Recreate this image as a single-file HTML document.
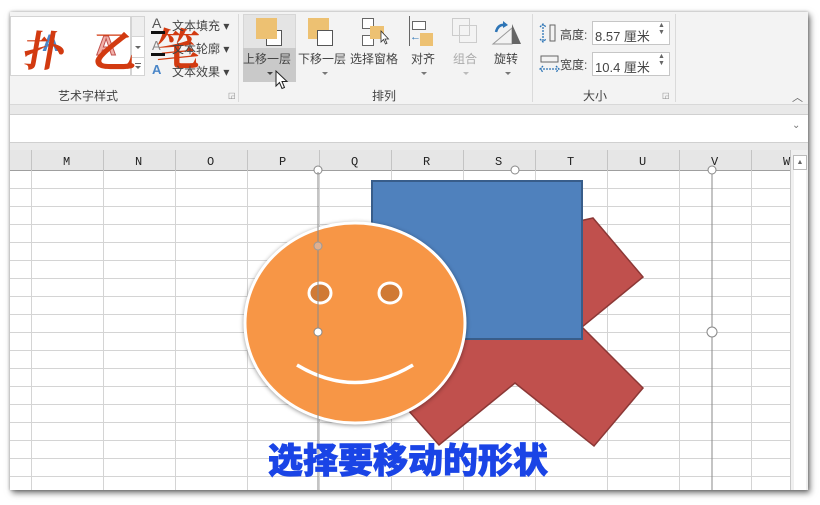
<!DOCTYPE html>
<html><head><meta charset="utf-8"><style>
*{margin:0;padding:0;box-sizing:border-box}
body{width:820px;height:505px;background:#fff;position:relative;overflow:hidden;font-family:"Liberation Sans","Noto Sans CJK SC",sans-serif;font-size:12px;color:#444}
.a{position:absolute}
.win{left:10px;top:12px;width:798px;height:478px;background:#f3f3f3;box-shadow:2px 3px 6px rgba(0,0,0,.55),0 0 3px rgba(0,0,0,.3);overflow:hidden}
.t{position:absolute;white-space:nowrap;font-size:12px;color:#444}
.sep{position:absolute;width:1px;background:#dadada}
.arr{position:absolute;width:0;height:0;border-left:3px solid transparent;border-right:3px solid transparent;border-top:3px solid #666}
</style></head><body>
<div class="a win">
 <div class="a" style="left:0;top:92px;width:798px;height:1px;background:#d8d8d8"></div>
 <div class="a" style="left:0;top:93px;width:798px;height:9px;background:#e9e9e9"></div>
 <div class="a" style="left:0;top:102px;width:798px;height:29px;background:#fff;border-top:1px solid #d0d0d0;border-bottom:1px solid #d0d0d0"></div>
 <div class="t" style="left:782px;top:108px;font-size:10px;color:#777">⌄</div>
 <div class="a" style="left:0;top:131px;width:798px;height:7px;background:#eaeaea"></div>
 <div class="a" style="left:0;top:4px;width:121px;height:60px;background:#fff;border:1px solid #d4d4d4"></div>
 <div class="a" style="left:121px;top:4px;width:14px;height:60px;background:#fff;border:1px solid #d4d4d4"></div>
 <div class="a" style="left:121px;top:4px;width:14px;height:21px;background:#eee;border:1px solid #d4d4d4"></div>
 <div class="a" style="left:121px;top:45px;width:14px;height:19px;border:1px solid #d4d4d4"></div>
 <div class="arr" style="left:125px;top:34px"></div>
 <div class="a" style="left:125px;top:51px;width:6px;height:1px;background:#666"></div>
 <div class="arr" style="left:125px;top:54px"></div>
 <div class="t" style="left:32px;top:18px;font-size:24px;color:#4a86c8;font-weight:bold">A</div>
 <div class="t" style="left:86px;top:18px;font-size:28px;color:#f2b0a8;font-weight:bold;-webkit-text-stroke:1px #c0504d">A</div>
 <div class="t" style="left:14px;top:16px;font-size:42px;line-height:1;color:#d23a10;font-family:'Noto Serif CJK SC',serif;font-weight:700;transform:skewX(-10deg)">扑</div>
 <div class="t" style="left:82px;top:14px;font-size:44px;line-height:1;color:#d23a10;font-family:'Noto Serif CJK SC',serif;font-weight:700">乙</div>
 <div class="t" style="left:146px;top:12px;font-size:44px;line-height:1;color:#d23a10;font-family:'Noto Serif CJK SC',serif;font-weight:700">笔</div>
 <div class="t" style="left:142px;top:3px;font-size:14px;color:#555">A</div>
 <div class="a" style="left:141px;top:19px;width:14px;height:3px;background:#111"></div>
 <div class="t" style="left:162px;top:5px">文本填充 ▾</div>
 <div class="t" style="left:142px;top:26px;font-size:13px;color:#888">A</div>
 <div class="a" style="left:141px;top:41px;width:14px;height:3px;background:#111"></div>
 <div class="t" style="left:162px;top:28px">文本轮廓 ▾</div>
 <div class="t" style="left:142px;top:50px;font-size:13px;color:#4a86c8;font-weight:bold">A</div>
 <div class="t" style="left:162px;top:51px">文本效果 ▾</div>
 <div class="t" style="left:48px;top:75px">艺术字样式</div>
 <div class="t" style="left:218px;top:79px;font-size:8px;color:#888">◲</div>
 <div class="sep" style="left:228px;top:2px;height:88px"></div>
 <div class="a" style="left:233px;top:2px;width:53px;height:68px;background:#e4e4e4;border:1px solid #d6d6d6"></div>
 <div class="a" style="left:233px;top:36px;width:53px;height:34px;background:#c9c9c9"></div>
 <div class="a" style="left:256px;top:18px;width:16px;height:16px;background:#fff;border:1px solid #555"></div>
 <div class="a" style="left:246px;top:6px;width:21px;height:21px;background:#edc172"></div>
 <div class="t" style="left:233px;top:38px">上移一层</div>
 <div class="arr" style="left:257px;top:60px;border-top-color:#444"></div>
 <svg class="a" style="left:265px;top:58px" width="14" height="22"><path d="M1 1 L1 16 L4.5 12.5 L7 18.5 L9.5 17.5 L7 11.5 L12 11.5 Z" fill="#fff" stroke="#222" stroke-width="1"/></svg>
 <div class="a" style="left:298px;top:6px;width:21px;height:21px;background:#edc172"></div>
 <div class="a" style="left:307px;top:18px;width:16px;height:16px;background:#fff;border:1px solid #555"></div>
 <div class="t" style="left:288px;top:38px">下移一层</div>
 <div class="arr" style="left:312px;top:60px;border-color:#777 transparent transparent"></div>
 <div class="a" style="left:352px;top:6px;width:12px;height:11px;background:#fff;border:1px solid #666"></div>
 <div class="a" style="left:352px;top:23px;width:12px;height:11px;background:#fff;border:1px solid #666"></div>
 <div class="a" style="left:360px;top:14px;width:14px;height:13px;background:#edc172"></div>
 <svg class="a" style="left:370px;top:18px" width="10" height="16"><path d="M1 1 L1 12 L3.5 9.5 L5.5 14 L7 13.3 L5 9 L8.5 9 Z" fill="#fff" stroke="#333" stroke-width=".8"/></svg>
 <div class="t" style="left:340px;top:38px">选择窗格</div>
 <div class="a" style="left:399px;top:4px;width:1px;height:30px;background:#666"></div>
 <div class="a" style="left:402px;top:9px;width:14px;height:9px;background:#fff;border:1px solid #666"></div>
 <div class="a" style="left:410px;top:21px;width:13px;height:13px;background:#edc172"></div>
 <div class="t" style="left:400px;top:19px;font-size:11px;color:#2e75b6;font-weight:bold">←</div>
 <div class="t" style="left:401px;top:38px">对齐</div>
 <div class="arr" style="left:411px;top:60px;border-color:#777 transparent transparent"></div>
 <div class="a" style="left:442px;top:6px;width:18px;height:18px;border:1px solid #ccc"></div>
 <div class="a" style="left:449px;top:13px;width:18px;height:18px;border:1px solid #ccc"></div>
 <div class="t" style="left:443px;top:38px;color:#aaa">组合</div>
 <div class="arr" style="left:453px;top:60px;border-color:#bbb transparent transparent"></div>
 <svg class="a" style="left:480px;top:6px" width="32" height="28"><path d="M3 26 L22 26 L22 10 Z" fill="none" stroke="#999"/><path d="M22 6 L22 26 L31 26 Z" fill="#666"/><path d="M6 14 Q8 6 15 7" stroke="#2e75b6" stroke-width="2.5" fill="none"/><path d="M13 3 L18 7 L13 10Z" fill="#2e75b6"/></svg>
 <div class="t" style="left:484px;top:38px">旋转</div>
 <div class="arr" style="left:495px;top:60px;border-color:#777 transparent transparent"></div>
 <div class="t" style="left:362px;top:75px">排列</div>
 <div class="sep" style="left:522px;top:2px;height:88px"></div>
 <svg class="a" style="left:529px;top:11px" width="22" height="20"><path d="M4 1 L4 19 M1 4 L4 1 L7 4 M1 16 L4 19 L7 16" stroke="#2e75b6" fill="none" stroke-width="1.3" stroke-dasharray="2 1"/><rect x="11" y="2" width="5" height="16" fill="none" stroke="#666"/></svg>
 <div class="t" style="left:550px;top:14px">高度:</div>
 <div class="a" style="left:582px;top:9px;width:78px;height:24px;background:#fff;border:1px solid #c6c6c6"></div>
 <div class="t" style="left:585px;top:14px;font-size:13px">8.57 厘米</div>
 <div class="t" style="left:648px;top:10px;font-size:7px;color:#666">▲<br>▼</div>
 <svg class="a" style="left:529px;top:42px" width="22" height="20"><rect x="2" y="2" width="17" height="6" fill="none" stroke="#666"/><path d="M1 15 L20 15 M4 12 L1 15 L4 18 M17 12 L20 15 L17 18" stroke="#2e75b6" fill="none" stroke-width="1.3" stroke-dasharray="2 1"/></svg>
 <div class="t" style="left:550px;top:44px">宽度:</div>
 <div class="a" style="left:582px;top:40px;width:78px;height:24px;background:#fff;border:1px solid #c6c6c6"></div>
 <div class="t" style="left:585px;top:45px;font-size:13px">10.4 厘米</div>
 <div class="t" style="left:648px;top:41px;font-size:7px;color:#666">▲<br>▼</div>
 <div class="t" style="left:573px;top:75px">大小</div>
 <div class="t" style="left:652px;top:79px;font-size:8px;color:#888">◲</div>
 <div class="sep" style="left:665px;top:2px;height:88px"></div>
 <div class="t" style="left:782px;top:77px;font-size:11px;color:#666">︿</div>
 <div class="a" style="left:0;top:138px;width:780px;height:21px;background:#e6e6e6;border-bottom:1px solid #9f9f9f"></div>
 <div class="a" style="left:0;top:159px;width:780px;height:320px;background-color:#fff;background-image:linear-gradient(#d4d4d4 1px,transparent 1px),linear-gradient(90deg,#d4d4d4 1px,transparent 1px);background-size:100% 18px,72px 100%;background-position:0 17px,21px 0"></div>
 <div class="a" style="left:0;top:138px;width:780px;height:21px;background-image:linear-gradient(90deg,#c4c4c4 1px,transparent 1px);background-size:72px 100%;background-position:21px 0"></div>
 <div class="a" style="left:780px;top:138px;width:18px;height:340px;background:#f0f0f0;border-left:1px solid #c8c8c8"></div>
 <div class="a" style="left:783px;top:143px;width:14px;height:15px;background:#fff;border:1px solid #bbb;font-size:7px;text-align:center;line-height:13px;color:#666">▲</div>
 <div class="a" style="left:784px;top:158px;width:12px;height:320px;background:#fff"></div>
</div>
<div class="a" style="left:0;top:155px;width:820px;font-family:'Liberation Mono',monospace;font-size:12px;color:#222">
 <span class="a" style="left:63px">M</span><span class="a" style="left:135px">N</span><span class="a" style="left:207px">O</span><span class="a" style="left:279px">P</span><span class="a" style="left:351px">Q</span><span class="a" style="left:423px">R</span><span class="a" style="left:495px">S</span><span class="a" style="left:567px">T</span><span class="a" style="left:639px">U</span><span class="a" style="left:711px">V</span><span class="a" style="left:783px">W</span>
</div>
<svg class="a" style="left:0;top:0" width="820" height="505">
 <path d="M318 172 L318 490 M712 172 L712 490" stroke="#8a8a8a" stroke-width="1"/>
 <circle cx="318" cy="170" r="4" fill="#fff" stroke="#888"/><circle cx="515" cy="170" r="4" fill="#fff" stroke="#888"/><circle cx="712" cy="170" r="4" fill="#fff" stroke="#888"/>
 <polygon points="408,410 450,360 450,250 593,218 643,277 582,327 643,388 594,446 515,383 439,445" fill="#c0504d" stroke="#8c3836" stroke-width="1.5"/>
 <rect x="372" y="181" width="210" height="158" fill="#4f81bd" stroke="#385d8a" stroke-width="2"/>
 <ellipse cx="355" cy="323" rx="110" ry="100" fill="#f79646" stroke="#fff" stroke-width="3" style="filter:drop-shadow(0 1px 2px rgba(0,0,0,.4))"/>
 <ellipse cx="320" cy="293" rx="11" ry="10" fill="#d07a35" stroke="#fff" stroke-width="3"/>
 <ellipse cx="390" cy="293" rx="11" ry="10" fill="#d07a35" stroke="#fff" stroke-width="3"/>
 <path d="M297 365 Q355 400 413 365" stroke="#fff" stroke-width="3.5" fill="none"/>
 <path d="M318 172 L318 490" stroke="#8a8a8a" stroke-width="1"/>
 <circle cx="318" cy="246" r="4" fill="#e0b090" stroke="#999"/>
 <circle cx="318" cy="332" r="4" fill="#fff" stroke="#888"/>
 <circle cx="712" cy="332" r="5" fill="#fff" stroke="#888"/>
 <text x="268" y="473" font-family="Noto Sans CJK SC, sans-serif" font-weight="900" font-size="35" fill="#1a44e6" stroke="#1a44e6" stroke-width="0.8">选择要移动的形状</text>
</svg>
</body></html>
